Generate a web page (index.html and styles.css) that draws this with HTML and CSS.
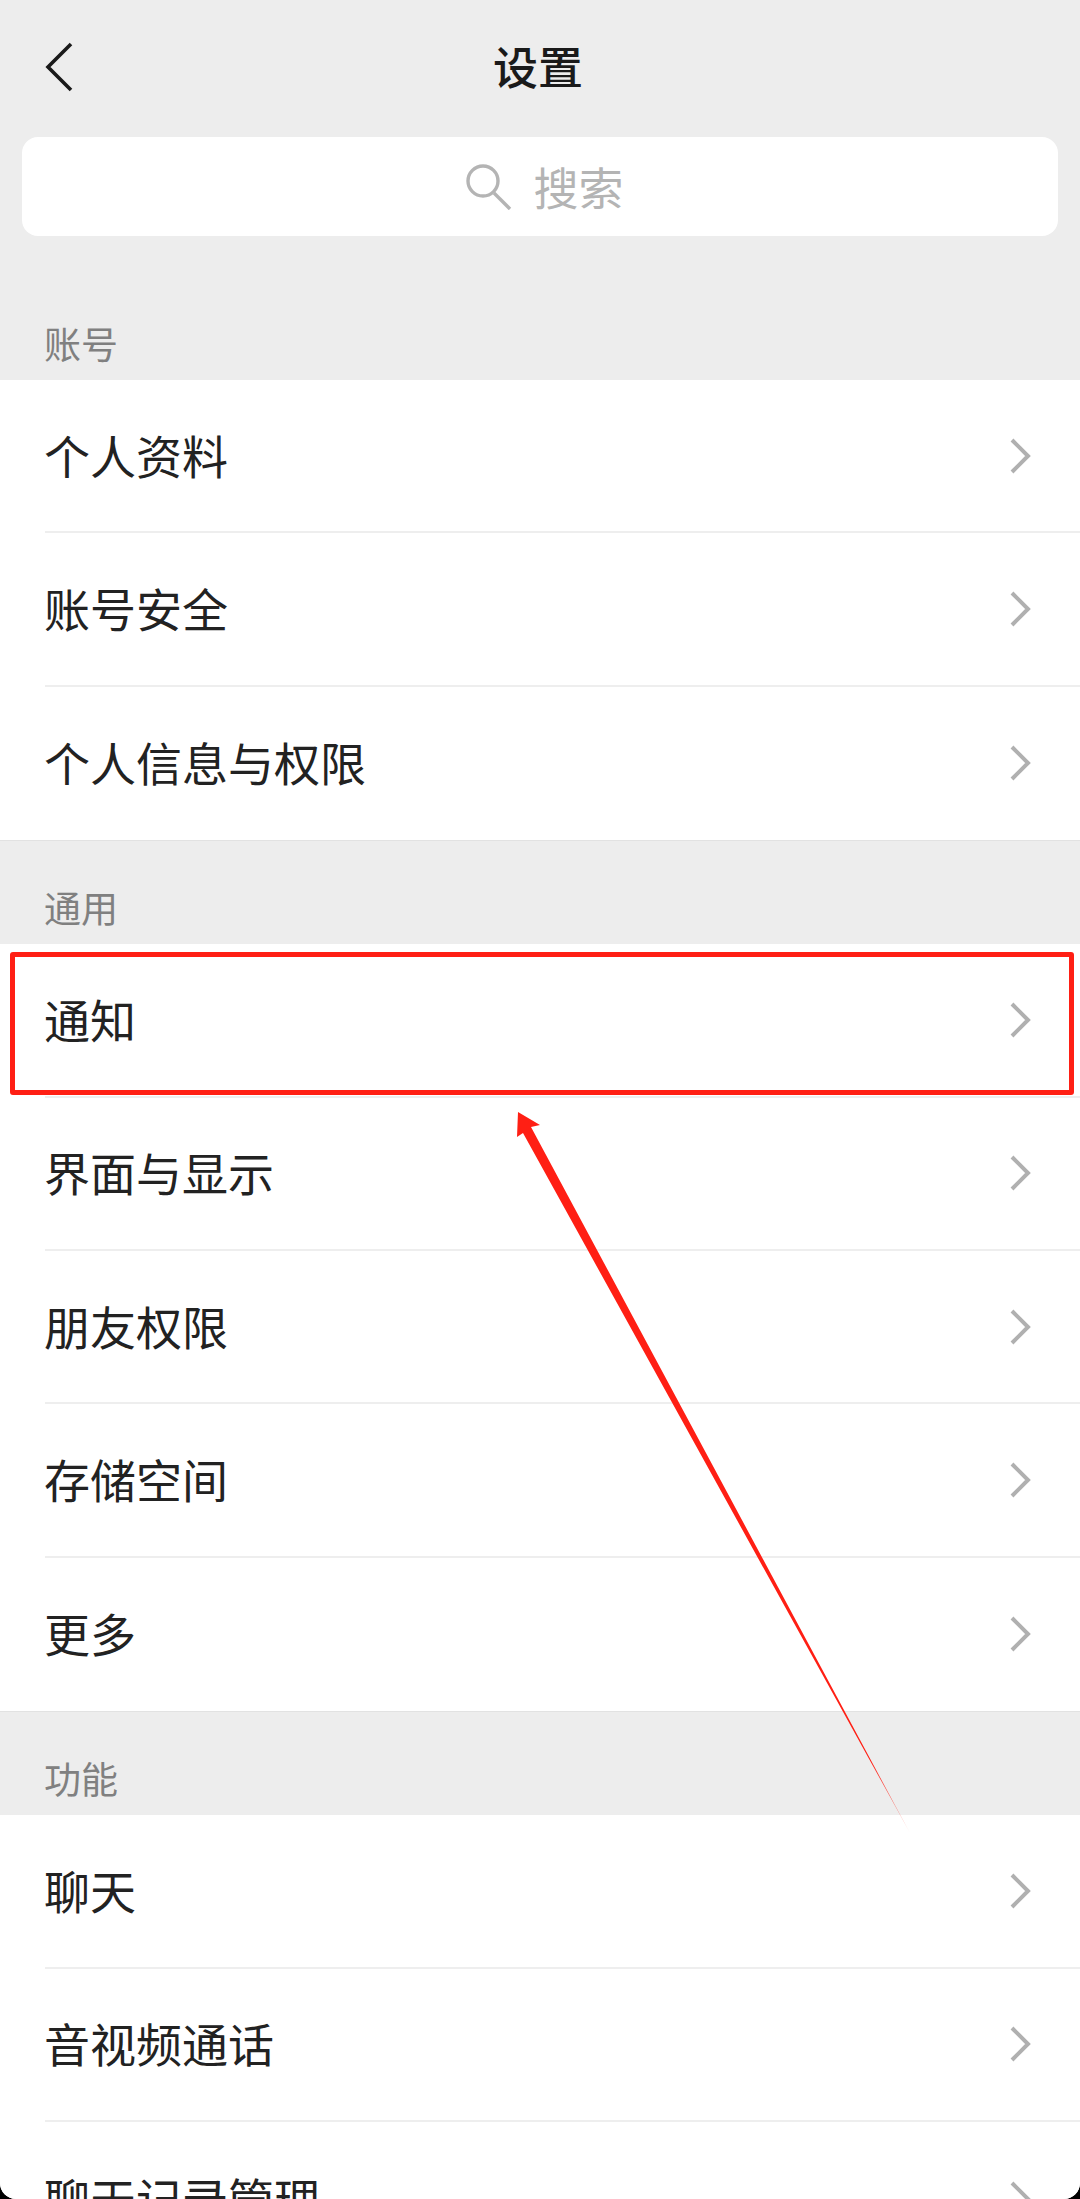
FILE: index.html
```html
<!DOCTYPE html>
<html lang="zh-CN">
<head>
    <meta charset="UTF-8">
    <meta name="viewport" content="width=device-width, initial-scale=1.0">
    <title>设置</title>
    <link rel="stylesheet" href="styles.css">
</head>
<body>
    <svg width="0" height="0" class="defs">
        <symbol id="chevron" viewBox="0 0 24 40">
            <path d="M4 4 L20 20 L4 36" fill="none" stroke="currentColor" stroke-width="4"/>
        </symbol>
    </svg>

    <div class="page">
        <header class="navbar">
            <svg class="back" viewBox="0 0 30 50">
                <path d="M26 2 L3 25 L26 48" fill="none" stroke="currentColor" stroke-width="3.6"/>
            </svg>
            <h1 class="navbar-title">设置</h1>
            <span></span>
        </header>

        <div class="search">
            <svg class="search-icon" viewBox="0 0 46 46">
                <circle cx="17" cy="17" r="15" fill="none" stroke="currentColor" stroke-width="3.4"/>
                <path d="M28 29 L44 45" fill="none" stroke="currentColor" stroke-width="3.4"/>
            </svg>
            <span>搜索</span>
        </div>

        <h2 class="section-title section-title-first">账号</h2>
        <ul class="list">
            <li class="row"><div class="row-inner"><span>个人资料</span><svg class="arrow-right"><use href="#chevron"/></svg></div></li>
            <li class="row"><div class="row-inner"><span>账号安全</span><svg class="arrow-right"><use href="#chevron"/></svg></div></li>
            <li class="row"><div class="row-inner"><span>个人信息与权限</span><svg class="arrow-right"><use href="#chevron"/></svg></div></li>
        </ul>

        <h2 class="section-title">通用</h2>
        <ul class="list">
            <li class="row">
                <div class="row-inner"><span>通知</span><svg class="arrow-right"><use href="#chevron"/></svg></div>
                <div class="highlight"></div>
            </li>
            <li class="row"><div class="row-inner"><span>界面与显示</span><svg class="arrow-right"><use href="#chevron"/></svg></div></li>
            <li class="row"><div class="row-inner"><span>朋友权限</span><svg class="arrow-right"><use href="#chevron"/></svg></div></li>
            <li class="row"><div class="row-inner"><span>存储空间</span><svg class="arrow-right"><use href="#chevron"/></svg></div></li>
            <li class="row"><div class="row-inner"><span>更多</span><svg class="arrow-right"><use href="#chevron"/></svg></div></li>
        </ul>

        <h2 class="section-title">功能</h2>
        <ul class="list">
            <li class="row"><div class="row-inner"><span>聊天</span><svg class="arrow-right"><use href="#chevron"/></svg></div></li>
            <li class="row"><div class="row-inner"><span>音视频通话</span><svg class="arrow-right"><use href="#chevron"/></svg></div></li>
            <li class="row"><div class="row-inner"><span>聊天记录管理</span><svg class="arrow-right"><use href="#chevron"/></svg></div></li>
        </ul>

        <!-- annotation arrow drawn on top of the screenshot -->
        <svg class="annotation" viewBox="0 0 1080 2199">
            <defs>
                <linearGradient id="fade" gradientUnits="userSpaceOnUse" x1="518" y1="1112" x2="910" y2="1833">
                    <stop offset="0" stop-color="#ff1f14"/>
                    <stop offset="0.9" stop-color="#ff1f14"/>
                    <stop offset="1" stop-color="#ff1f14" stop-opacity="0.3"/>
                </linearGradient>
            </defs>
            <polygon points="518,1112 540,1125 531,1127 910,1833 523,1133 517,1137" fill="url(#fade)"/>
        </svg>
    </div>
</body>
</html>
```

FILE: styles.css
```css
* {
    box-sizing: border-box;
}

html, body {
    margin: 0;
    padding: 0;
    background: #000;
}

body {
    width: 1080px;
    height: 2199px;
    overflow: hidden;
    font-family: 'Noto Sans CJK SC', 'Noto Sans', sans-serif;
}

.defs {
    position: absolute;
}

.page {
    position: relative;
    width: 1080px;
    height: 2199px;
    overflow: hidden;
    background: #ededed;
    border-radius: 0 0 16px 16px;
}

.navbar {
    display: grid;
    grid-template-columns: 1fr auto 1fr;
    align-items: center;
    height: 134px;
    padding: 0 45px;
}

.back {
    width: 30px;
    height: 50px;
    color: #1a1a1a;
}

.navbar-title {
    margin: 0 4px 2px 0;
    font-size: 45px;
    font-weight: 500;
    line-height: 60px;
    color: #1a1a1a;
}

.search {
    display: flex;
    justify-content: center;
    align-items: center;
    gap: 21px;
    height: 99px;
    margin: 3px 22px 0;
    padding-left: 10px;
    background: #fff;
    border-radius: 16px;
    font-size: 45px;
    color: #b4b4b4;
}

.search-icon {
    width: 46px;
    height: 46px;
}

.section-title {
    display: flex;
    align-items: flex-end;
    height: 103px;
    margin: 0;
    padding: 0 44px 11px;
    font-size: 37px;
    font-weight: 400;
    line-height: 52px;
    color: #808080;
}

.section-title-first {
    height: 144px;
}

.list {
    margin: 0;
    padding: 0;
    list-style: none;
    background: #fff;
    border-bottom: 1px solid #e2e2e2;
}

.row {
    position: relative;
    height: 153.4px;
    padding-left: 45px;
    font-size: 46px;
    color: #222;
}

.row-inner {
    display: flex;
    justify-content: space-between;
    align-items: center;
    height: 100%;
    padding-right: 48px;
    border-bottom: 2px solid #eeeeee;
}

.row-inner span {
    margin: 0 0 4px -1px;
}

.row:last-child .row-inner {
    border-bottom: none;
}

.arrow-right {
    width: 24px;
    height: 40px;
    color: #b0b0b0;
}

/* red box around the highlighted row */
.highlight {
    position: absolute;
    top: 8px;
    left: 10px;
    right: 6px;
    height: 143px;
    border: 5.5px solid #ff1f14;
    border-radius: 3px;
}

.annotation {
    position: absolute;
    top: 0;
    left: 0;
    width: 1080px;
    height: 2199px;
}
```
